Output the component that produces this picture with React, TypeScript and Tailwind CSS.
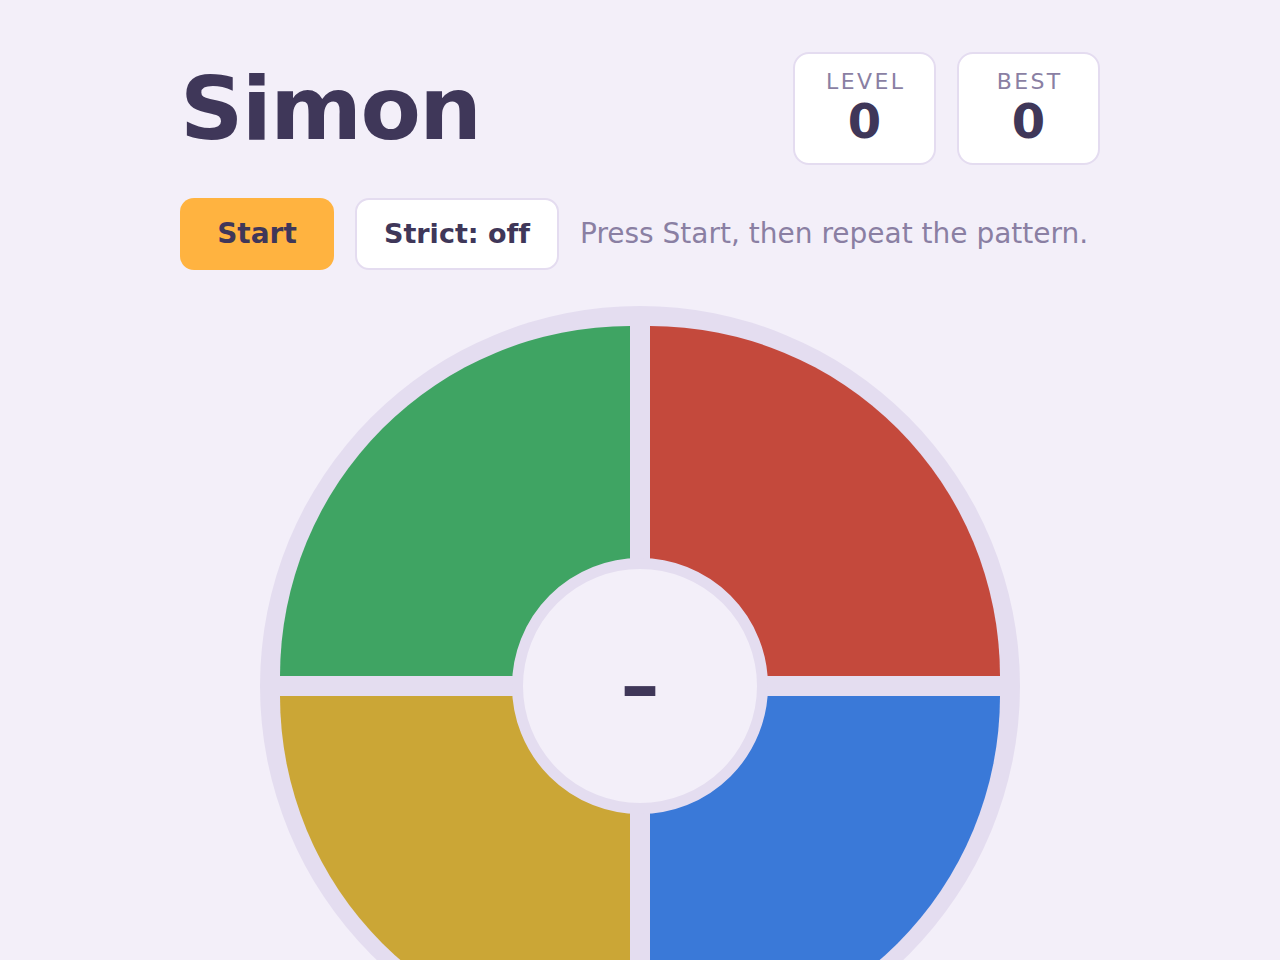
import { useState } from "react";

type Pad = {
  id: string;
  color: string;
  corner: string;
};

const pads: Pad[] = [
  { id: "green", color: "bg-[#3fa463]", corner: "rounded-tl-full" },
  { id: "red", color: "bg-[#c4493c]", corner: "rounded-tr-full" },
  { id: "yellow", color: "bg-[#cba636]", corner: "rounded-bl-full" },
  { id: "blue", color: "bg-[#3a79d8]", corner: "rounded-br-full" },
];

function StatBox({ label, value }: { label: string; value: number }) {
  return (
    <div className="w-[143px] h-[113px] rounded-[16px] border-2 border-[#e4dcf0] bg-white flex flex-col items-center justify-center">
      <div className="text-[22px] leading-[24px] tracking-[0.11em] pl-[0.11em] text-[#8a7fa3] mb-[3px] -mt-[3px]">
        {label}
      </div>
      <div className="text-[48px] leading-[48px] font-bold text-[#3f3759]">
        {value}
      </div>
    </div>
  );
}

export default function App() {
  const [strict, setStrict] = useState(false);
  const [level] = useState(0);
  const [best] = useState(0);

  return (
    <div
      className="min-h-screen bg-[#f3eff9] text-[#3f3759] overflow-hidden [font-variant-ligatures:none]"
      style={{ fontFamily: '"DejaVu Sans", sans-serif' }}
    >
      <div className="w-[920px] mx-auto pt-[52px]">
        {/* Header */}
        <div className="flex items-center justify-between">
          <h1 className="text-[88px] leading-none font-bold tracking-[-0.018em]">
            Simon
          </h1>
          <div className="flex gap-[21px]">
            <StatBox label="LEVEL" value={level} />
            <StatBox label="BEST" value={best} />
          </div>
        </div>

        {/* Controls */}
        <div className="mt-[33px] flex items-center gap-[21px]">
          <button className="w-[154px] h-[72px] rounded-[14px] bg-[#ffb340] text-[28px] font-bold text-[#3f3759]">
            Start
          </button>
          <button
            onClick={() => setStrict(!strict)}
            className="w-[204px] h-[72px] rounded-[14px] border-2 border-[#e4dcf0] bg-white text-[27px] font-bold text-[#3f3759]"
          >
            Strict: {strict ? "on" : "off"}
          </button>
          <p className="text-[28px] text-[#8a7fa3]">
            Press Start, then repeat the pattern.
          </p>
        </div>

        {/* Board */}
        <div className="mt-[36px] relative w-[760px] h-[760px] mx-auto rounded-full bg-[#e4ddf0] p-[20px] grid grid-cols-2 gap-[20px]">
          {pads.map((p) => (
            <button key={p.id} className={`${p.color} ${p.corner}`} />
          ))}
          <div className="absolute left-1/2 top-1/2 -translate-x-1/2 -translate-y-1/2 w-[256px] h-[256px] rounded-full bg-[#f3eff9] border-[11px] border-[#e4ddf0] flex items-center justify-center">
            <span className="text-[78px] font-bold leading-none">–</span>
          </div>
        </div>
      </div>
    </div>
  );
}
